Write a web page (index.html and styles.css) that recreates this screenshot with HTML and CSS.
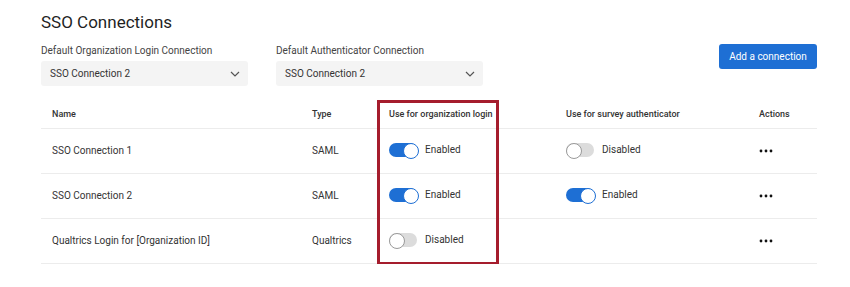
FILE: index.html
```html
<!DOCTYPE html>
<html lang="en">
<head>
  <meta charset="UTF-8" />
  <title>SSO Connections</title>
  <link rel="stylesheet" href="styles.css">
</head>
<body>

  <div class="page">
    <h1>SSO Connections</h1>

    <div class="toolbar">
      <div class="field">
        <label>Default Organization Login Connection</label>
        <div class="select">
          <span>SSO Connection 2</span>
          <svg width="10" height="6" viewBox="0 0 10 6"><path d="M1 1l4 4 4-4" fill="none" stroke="#555" stroke-width="1.2"/></svg>
        </div>
      </div>
      <div class="field">
        <label>Default Authenticator Connection</label>
        <div class="select">
          <span>SSO Connection 2</span>
          <svg width="10" height="6" viewBox="0 0 10 6"><path d="M1 1l4 4 4-4" fill="none" stroke="#555" stroke-width="1.2"/></svg>
        </div>
      </div>
      <button class="btn">Add a connection</button>
    </div>

    <div class="table-wrap">
      <table>
        <colgroup>
          <col class="c-name"><col class="c-type"><col class="c-org"><col class="c-survey"><col class="c-actions">
        </colgroup>
        <thead>
          <tr>
            <th>Name</th>
            <th>Type</th>
            <th>Use for organization login</th>
            <th>Use for survey authenticator</th>
            <th>Actions</th>
          </tr>
        </thead>
        <tbody>
          <tr>
            <td>SSO Connection 1</td>
            <td>SAML</td>
            <td><span class="toggle on"></span>Enabled</td>
            <td><span class="toggle"></span>Disabled</td>
            <td><svg class="dots" width="14" height="4" viewBox="0 0 14 4"><circle cx="2" cy="2" r="1.4"/><circle cx="7" cy="2" r="1.4"/><circle cx="12" cy="2" r="1.4"/></svg></td>
          </tr>
          <tr>
            <td>SSO Connection 2</td>
            <td>SAML</td>
            <td><span class="toggle on"></span>Enabled</td>
            <td><span class="toggle on"></span>Enabled</td>
            <td><svg class="dots" width="14" height="4" viewBox="0 0 14 4"><circle cx="2" cy="2" r="1.4"/><circle cx="7" cy="2" r="1.4"/><circle cx="12" cy="2" r="1.4"/></svg></td>
          </tr>
          <tr>
            <td>Qualtrics Login for [Organization ID]</td>
            <td>Qualtrics</td>
            <td><span class="toggle"></span>Disabled</td>
            <td></td>
            <td><svg class="dots" width="14" height="4" viewBox="0 0 14 4"><circle cx="2" cy="2" r="1.4"/><circle cx="7" cy="2" r="1.4"/><circle cx="12" cy="2" r="1.4"/></svg></td>
          </tr>
        </tbody>
      </table>
      <div class="highlight"></div>
    </div>
  </div>

</body>
</html>
```

FILE: styles.css
```css
* {
  margin: 0;
  padding: 0;
  box-sizing: border-box;
}

html, body {
  background-color: #fff;
  font-family: Roboto, 'Noto Sans', sans-serif;
  color: #2b2b2b;
}

.page {
  width: 776px;
  margin-left: 41px;
  padding-top: 10px;
}

h1 {
  font-size: 17px;
  font-weight: 400;
  line-height: 24px;
  color: #1f1f1f;
}

.toolbar {
  display: flex;
  align-items: flex-end;
  margin-top: 10px;
}

.field {
  width: 207px;
  margin-right: 28px;
}

.field label {
  display: block;
  font-size: 10px;
  line-height: 14px;
  color: #444;
  margin-bottom: 3px;
}

.select {
  height: 25px;
  background-color: #f4f4f4;
  border-radius: 3px;
  display: flex;
  align-items: center;
  justify-content: space-between;
  padding: 0 8px 0 9px;
  font-size: 10px;
  color: #333;
}

.btn {
  margin-left: auto;
  margin-bottom: 17px;
  width: 98px;
  height: 25px;
  background-color: #1e6fd4;
  color: #fff;
  border: none;
  border-radius: 3px;
  font-family: inherit;
  font-size: 10px;
}

/* table */
.table-wrap {
  position: relative;
  margin-top: 14px;
}

table {
  width: 100%;
  border-collapse: collapse;
  table-layout: fixed;
}

.c-name { width: 260px; }
.c-type { width: 77px; }
.c-org { width: 177px; }
.c-survey { width: 193px; }
.c-actions { width: 69px; }

th {
  text-align: left;
  font-size: 9px;
  font-weight: 500;
  color: #333;
  height: 28px;
  padding-left: 11px;
  border-bottom: 1px solid #ececec;
}

td {
  font-size: 10px;
  color: #333;
  height: 45px;
  padding-left: 11px;
  border-bottom: 1px solid #ececec;
  white-space: nowrap;
}

.toggle {
  display: inline-block;
  vertical-align: middle;
  width: 28px;
  height: 14px;
  border-radius: 7px;
  background-color: #dcdcdc;
  position: relative;
  margin-right: 8px;
  margin-top: -2px;
}

.toggle::after {
  content: '';
  position: absolute;
  top: 0;
  left: 0;
  width: 14px;
  height: 14px;
  border-radius: 50%;
  background-color: #fff;
  border: 1px solid #9a9a9a;
}

.toggle.on {
  background-color: #1e6fd4;
}

.toggle.on::after {
  left: 14px;
  border-color: #1e6fd4;
}

.dots {
  fill: #111;
  vertical-align: middle;
}

.highlight {
  position: absolute;
  left: 336px;
  top: 0;
  width: 122px;
  height: 165px;
  border: 3px solid #a51d2d;
}
```
